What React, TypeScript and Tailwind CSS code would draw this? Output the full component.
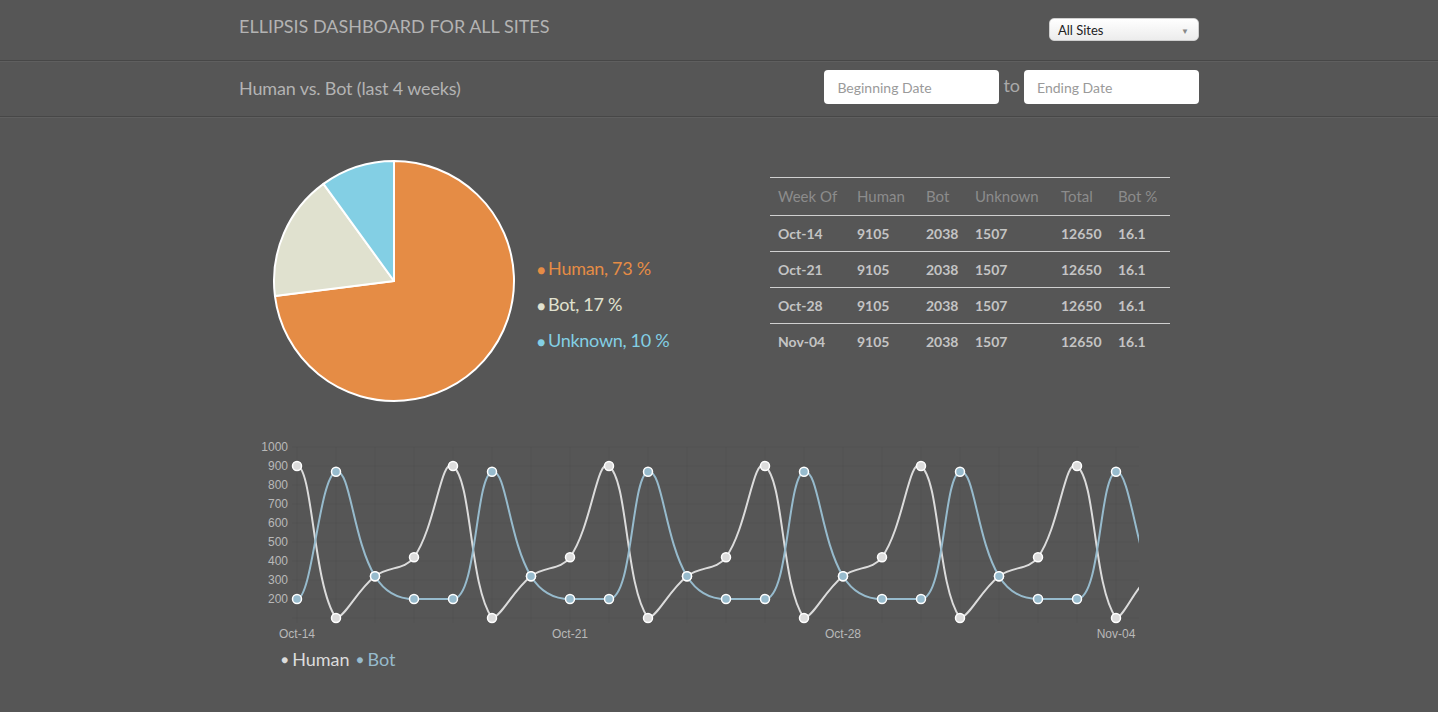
const HUMAN = [900, 100, 320, 420];
const BOT = [200, 870, 320, 200];

type Pt = { x: number; y: number };

const px = (i: number) => 298 + 39 * i;
const py = (v: number) => 618 - (v - 100) * 0.19;

// chart.js-like spline, but flat where two neighbouring points share a value
function curvePath(values: number[]) {
  const pts: Pt[] = values.map((v, i) => ({ x: px(i), y: py(v) }));
  const t = 0.4;
  const cps = pts.map((p, i) => {
    const a = pts[i - 1] || p;
    const b = pts[i + 1] || p;
    const d01 = Math.hypot(p.x - a.x, p.y - a.y);
    const d12 = Math.hypot(b.x - p.x, b.y - p.y);
    const sum = d01 + d12 || 1;
    const fa = (t * d01) / sum;
    const fb = (t * d12) / sum;
    const flat = a.y === p.y || b.y === p.y;
    const clamp = (y: number) => (flat ? p.y : Math.min(618, Math.max(447, y)));
    return {
      inner: { x: p.x - fa * (b.x - a.x), y: clamp(p.y - fa * (b.y - a.y)) },
      outer: { x: p.x + fb * (b.x - a.x), y: clamp(p.y + fb * (b.y - a.y)) },
    };
  });
  let d = `M${pts[0].x},${pts[0].y}`;
  for (let i = 1; i < pts.length; i++) {
    const o = cps[i - 1].outer;
    const n = cps[i].inner;
    d += ` C${o.x},${o.y} ${n.x},${n.y} ${pts[i].x},${pts[i].y}`;
  }
  return { d, pts };
}

function Pie() {
  const cx = 122;
  const cy = 122;
  const r = 120;
  const slices = [
    { v: 73, color: "#e58c45" },
    { v: 17, color: "#e0e1cf" },
    { v: 10, color: "#83cfe4" },
  ];
  let start = -Math.PI / 2;
  return (
    <svg width="244" height="244" viewBox="0 0 244 244">
      {slices.map((s, i) => {
        const end = start + (s.v / 100) * Math.PI * 2;
        const x1 = cx + r * Math.cos(start);
        const y1 = cy + r * Math.sin(start);
        const x2 = cx + r * Math.cos(end);
        const y2 = cy + r * Math.sin(end);
        const large = end - start > Math.PI ? 1 : 0;
        const d = `M${cx},${cy} L${x1},${y1} A${r},${r} 0 ${large} 1 ${x2},${y2} Z`;
        start = end;
        return <path key={i} d={d} fill={s.color} stroke="#fff" strokeWidth={2} strokeLinejoin="round" />;
      })}
    </svg>
  );
}

function LineChart() {
  const n = 23;
  const human = curvePath(Array.from({ length: n }, (_, i) => HUMAN[i % 4]));
  const bot = curvePath(Array.from({ length: n }, (_, i) => BOT[i % 4]));
  const yTicks = [100, 200, 300, 400, 500, 600, 700, 800, 900, 1000];
  const labels: Record<number, string> = { 0: "Oct-14", 7: "Oct-21", 14: "Oct-28", 21: "Nov-04" };
  return (
    <svg width="900" height="210" viewBox="240 437 900 210" className="block">
      {yTicks.map((v) => (
        <line key={v} x1={293} x2={1160} y1={py(v)} y2={py(v)} stroke="rgba(0,0,0,0.045)" strokeWidth={1} />
      ))}
      {Array.from({ length: n }, (_, i) => (
        <line key={i} x1={px(i)} x2={px(i)} y1={447} y2={623} stroke="rgba(0,0,0,0.045)" strokeWidth={1} />
      ))}
      {yTicks.slice(1).map((v) => (
        <text
          key={v}
          x={289}
          y={py(v) + 4}
          textAnchor="end"
          fontSize={12}
          fill="#b9b9b9"
          fontFamily="'Liberation Sans', Arial, sans-serif"
        >
          {v}
        </text>
      ))}
      {Object.entries(labels).map(([i, l]) => (
        <text
          key={i}
          x={px(Number(i))}
          y={638}
          textAnchor="middle"
          fontSize={12}
          fill="#b9b9b9"
          fontFamily="'Liberation Sans', Arial, sans-serif"
        >
          {l}
        </text>
      ))}
      <path d={human.d} fill="none" stroke="#dcdcdc" strokeWidth={2} />
      {human.pts.map((p, i) => (
        <circle key={i} cx={p.x} cy={p.y} r={4.5} fill="#dcdcdc" stroke="#fff" strokeWidth={1.5} />
      ))}
      <path d={bot.d} fill="none" stroke="#97bbcd" strokeWidth={2} />
      {bot.pts.map((p, i) => (
        <circle key={i} cx={p.x} cy={p.y} r={4.5} fill="#97bbcd" stroke="#fff" strokeWidth={1.5} />
      ))}
    </svg>
  );
}

export default function App() {
  const rows = ["Oct-14", "Oct-21", "Oct-28", "Nov-04"];
  return (
    <div className="min-h-[712px] bg-[#565656] font-[Lato,sans-serif]">
      <div className="border-b border-[#474747] shadow-[0_1px_0_#5f5f5f]">
        <div className="w-[960px] mx-auto h-[60px] flex items-center justify-between">
          <h1 className="text-[18px] text-[#b3b3b3] uppercase pb-[7px]">Ellipsis Dashboard for all sites</h1>
          <div className="w-[150px] h-[23px] mt-[-1px] rounded-[5px] border border-[#cfcfcf] bg-gradient-to-b from-white to-[#ececec] flex items-center justify-between pl-2 pr-[9px] pt-[2px] text-[13px] text-[#222]">
            <span>All Sites</span>
            <span className="text-[8px] text-[#888]">▼</span>
          </div>
        </div>
      </div>
      <div className="border-b border-[#474747] shadow-[0_1px_0_#5f5f5f]">
        <div className="w-[960px] mx-auto h-[55px] flex items-center justify-between">
          <h2 className="text-[18px] text-[#b3b3b3] tracking-[-0.15px]">Human vs. Bot (last 4 weeks)</h2>
          <div className="flex items-center gap-[4px] mb-[3px]">
            <div className="w-[175px] h-[34px] bg-white rounded-[4px] flex items-center pl-[13px] text-[14px] text-[#9a9a9a]">
              Beginning Date
            </div>
            <span className="text-[18px] text-[#aaa] mb-[4px]">to</span>
            <div className="w-[175px] h-[34px] bg-white rounded-[4px] flex items-center pl-[13px] text-[14px] text-[#9a9a9a]">
              Ending Date
            </div>
          </div>
        </div>
      </div>

      <div className="w-[960px] mx-auto">
        <div className="flex mt-[42px]">
          <div className="w-[531px] flex pl-[33px]">
            <Pie />
            <div className="ml-[21px] mt-[98px] flex flex-col gap-[12px] text-[18px] leading-[23px] tracking-[-0.3px]">
              <div className="text-[#e58c45]">
                <span className="text-[14px] mr-[3px]">●</span>Human, 73 %
              </div>
              <div className="text-[#e0e1cf]">
                <span className="text-[14px] mr-[3px]">●</span>Bot, 17 %
              </div>
              <div className="text-[#83cfe4]">
                <span className="text-[14px] mr-[3px]">●</span>Unknown, 10 %
              </div>
            </div>
          </div>
          <div className="w-[400px] mt-[18px]">
            <table className="w-full table-fixed border-t border-[#d0d0d0] text-left">
              <thead>
                <tr className="h-[38px] text-[15px] text-[#8c8c8c]">
                  <th className="w-[79px] pl-[8px] font-normal">Week Of</th>
                  <th className="w-[69px] pl-[8px] font-normal">Human</th>
                  <th className="w-[49px] pl-[8px] font-normal">Bot</th>
                  <th className="w-[86px] pl-[8px] font-normal">Unknown</th>
                  <th className="w-[57px] pl-[8px] font-normal">Total</th>
                  <th className="pl-[8px] font-normal">Bot %</th>
                </tr>
              </thead>
              <tbody>
                {rows.map((r) => (
                  <tr key={r} className="h-[36px] border-t border-[#d0d0d0] text-[14px] font-bold text-[#c4c4c4]">
                    <td className="pl-[8px]">{r}</td>
                    <td className="pl-[8px]">9105</td>
                    <td className="pl-[8px]">2038</td>
                    <td className="pl-[8px]">1507</td>
                    <td className="pl-[8px]">12650</td>
                    <td className="pl-[8px]">16.1</td>
                  </tr>
                ))}
              </tbody>
            </table>
          </div>
        </div>

        <div className="mt-[34px] overflow-hidden">
          <LineChart />
        </div>
        <div className="pl-[42px] text-[18px] leading-[24px]">
          <span className="text-[#dcdcdc]">
            <span className="text-[12px] mr-[4px] align-[2px]">●</span>Human
          </span>{" "}
          <span className="text-[#97bbcd] ml-[2px]">
            <span className="text-[12px] mr-[4px] align-[2px]">●</span>Bot
          </span>
        </div>
      </div>
    </div>
  );
}
